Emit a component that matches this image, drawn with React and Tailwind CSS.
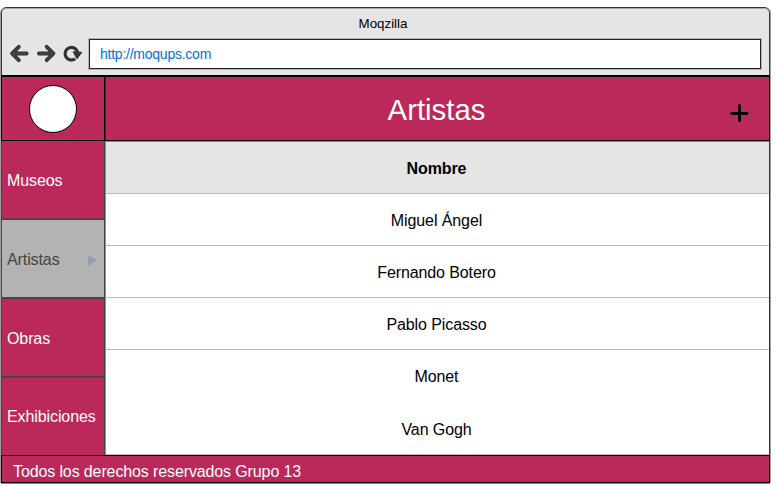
const menu = [
  { label: 'Museos', box: 'h-[78px] border-b border-[#6b3a50] pt-[3px]' },
  { label: 'Artistas', box: 'h-[78px] border-t border-[#3b444d] pt-[3px]', active: true },
  { label: 'Obras', box: 'h-[79px] border-t-2 border-[#4a434d] pt-[2px]' },
  { label: 'Exhibiciones', box: 'h-[79px] border-t-2 border-[#4a434d]' },
];

const artists = ['Miguel Ángel', 'Fernando Botero', 'Pablo Picasso', 'Monet'];

function NavIcons() {
  return (
    <svg width="87" height="32" viewBox="0 0 87 32" className="shrink-0" fill="none">
      <g stroke="#2d2d2d" strokeWidth="3.8" strokeLinecap="round" strokeLinejoin="round">
        <path d="M24.6 15.5H10.5M16.8 8.8L10 15.5L16.8 22.2" />
        <path d="M36.9 15.5H51M44.7 8.8L51.5 15.5L44.7 22.2" />
      </g>
      <g stroke="#444" strokeWidth="1.8" strokeLinecap="round">
        <path d="M24.6 15.5H11M16.8 8.8L10 15.5L16.8 22.2" />
        <path d="M36.9 15.5H51M44.7 8.8L51.5 15.5L44.7 22.2" />
      </g>
      <path d="M73.2 20.7A6.3 6.3 0 1 1 75.6 14.5" stroke="#333" strokeWidth="3.2" />
      <path d="M71.2 13.8L79.8 14.3L75 20.8Z" fill="#3a3a3a" stroke="#2d2d2d" strokeWidth="1" strokeLinejoin="round" />
    </svg>
  );
}

export default function App() {
  return (
    <div className="h-[487px] w-[776px] overflow-hidden bg-white pl-px pt-[7px] font-['Liberation_Sans',Arial,sans-serif] text-black">
      <div className="flex h-[476px] w-[769px] flex-col rounded-t-[6px] border border-[#333] bg-white shadow-[1px_0_0_#a0a0a0,-1px_0_0_#a0a0a0,0_1px_0_#888]">
        <div className="h-[67px] shrink-0 rounded-t-[5px] border-t border-[#a9a9a9] bg-[#e5e5e5]">
          <div className="flex h-[29px] items-center justify-center pr-[5px] text-[13.33px]">Moqzilla</div>
          <div className="flex h-[32px] items-center">
            <NavIcons />
            <div className="flex h-[30px] w-[672px] items-center border border-[#222] bg-white pl-[10px] text-[14px] tracking-[-0.24px] text-[#0070e0] shadow-[0_0_0_1px_#b5b5b5]">
              http://moqups.com
            </div>
          </div>
        </div>

        <header className="-mx-px flex h-[66px] shrink-0 border-y border-black border-t-2 bg-[#bb285a]">
          <div className="flex w-[104px] items-center justify-center border-x border-black">
            <div className="size-12 rounded-full border-[1.5px] border-black bg-white" />
          </div>
          <div className="grid flex-1 grid-cols-[1fr_auto_1fr] items-center border-x border-black border-l-[#5c1730]">
            <h1 className="col-start-2 mr-[2px] pt-[3px] text-[29.33px] leading-8 text-white">Artistas</h1>
            <svg width="20" height="20" viewBox="0 0 20 20" className="mr-[20px] mt-[9px] justify-self-end">
              <path d="M10.5 2.4V17.6M2.7 10.5H18" stroke="black" strokeWidth="2.8" strokeLinecap="round" />
            </svg>
          </div>
        </header>

        <div className="-ml-px flex h-[314px] shrink-0">
          <nav className="w-[104px] shrink-0 border-x border-[#3b444d] text-[16px] tracking-[-0.1px] text-white">
            {menu.map((item) => (
              <div
                key={item.label}
                className={`flex items-center justify-between pl-[5px] pr-[7px] ${item.box} ${item.active ? 'bg-[#b3b3b3] text-[#444]' : 'bg-[#bb285a]'}`}
              >
                {item.label}
                {item.active && (
                  <svg width="9" height="11" viewBox="0 0 9 11">
                    <path d="M0 0L9 5.5L0 11Z" fill="#949bb2" />
                  </svg>
                )}
              </div>
            ))}
          </nav>
          <div className="flex-1 border-l border-[#8c9499] text-center text-[16px] leading-[54px] tracking-[-0.1px]">
            <div className="h-[53px] border-b border-t border-b-[#bbb] border-t-[#888] bg-[#e5e5e5] pr-[2px] font-bold">Nombre</div>
            {artists.map((name, i) => (
              <div key={name} className={`h-[52px] pr-[2px] ${i < 3 ? 'border-b border-[#bbb]' : ''}`}>
                {name}
              </div>
            ))}
            <div className="h-[53px] border-b border-[#bbb] pr-[2px] leading-[56px]">Van Gogh</div>
          </div>
        </div>

        <footer className="-mx-px flex h-[28px] shrink-0 items-center border border-black bg-[#bb285a] pl-[11px] pt-[5px] text-[16px] tracking-[-0.12px] text-white">
          Todos los derechos reservados Grupo 13
        </footer>
      </div>
    </div>
  );
}
